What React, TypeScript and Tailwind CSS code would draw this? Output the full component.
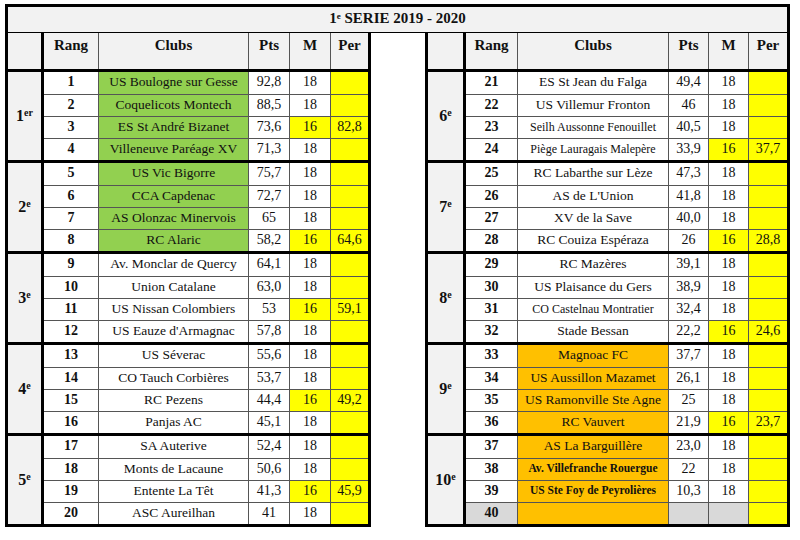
import React from "react";

type Row = {
  rang: number;
  club: string;
  pts: string;
  m: string;
  per: string;
  size?: "small" | "tiny";
};

type Section = { num: string; sup: string; rows: Row[] };

type Cols = { sec: string; rang: string; club: string; pts: string; m: string; per: string };

// widths are border-box (cell border included)
const leftCols: Cols = {
  sec: "w-[36px]",
  rang: "w-[54px]",
  club: "w-[150px]",
  pts: "w-[41px]",
  m: "w-[41px]",
  per: "w-[38px]",
};

const rightCols: Cols = {
  sec: "w-[38px]",
  rang: "w-[51px]",
  club: "w-[151px]",
  pts: "w-[40px]",
  m: "w-[40px]",
  per: "w-[39px]",
};

const leftSections: Section[] = [
  {
    num: "1",
    sup: "er",
    rows: [
      { rang: 1, club: "US Boulogne sur Gesse", pts: "92,8", m: "18", per: "" },
      { rang: 2, club: "Coquelicots Montech", pts: "88,5", m: "18", per: "" },
      { rang: 3, club: "ES St André Bizanet", pts: "73,6", m: "16", per: "82,8" },
      { rang: 4, club: "Villeneuve Paréage XV", pts: "71,3", m: "18", per: "" },
    ],
  },
  {
    num: "2",
    sup: "e",
    rows: [
      { rang: 5, club: "US Vic Bigorre", pts: "75,7", m: "18", per: "" },
      { rang: 6, club: "CCA Capdenac", pts: "72,7", m: "18", per: "" },
      { rang: 7, club: "AS Olonzac Minervois", pts: "65", m: "18", per: "" },
      { rang: 8, club: "RC Alaric", pts: "58,2", m: "16", per: "64,6" },
    ],
  },
  {
    num: "3",
    sup: "e",
    rows: [
      { rang: 9, club: "Av. Monclar de Quercy", pts: "64,1", m: "18", per: "" },
      { rang: 10, club: "Union Catalane", pts: "63,0", m: "18", per: "" },
      { rang: 11, club: "US Nissan Colombiers", pts: "53", m: "16", per: "59,1" },
      { rang: 12, club: "US Eauze d'Armagnac", pts: "57,8", m: "18", per: "" },
    ],
  },
  {
    num: "4",
    sup: "e",
    rows: [
      { rang: 13, club: "US Séverac", pts: "55,6", m: "18", per: "" },
      { rang: 14, club: "CO Tauch Corbières", pts: "53,7", m: "18", per: "" },
      { rang: 15, club: "RC Pezens", pts: "44,4", m: "16", per: "49,2" },
      { rang: 16, club: "Panjas AC", pts: "45,1", m: "18", per: "" },
    ],
  },
  {
    num: "5",
    sup: "e",
    rows: [
      { rang: 17, club: "SA Auterive", pts: "52,4", m: "18", per: "" },
      { rang: 18, club: "Monts de Lacaune", pts: "50,6", m: "18", per: "" },
      { rang: 19, club: "Entente La Têt", pts: "41,3", m: "16", per: "45,9" },
      { rang: 20, club: "ASC Aureilhan", pts: "41", m: "18", per: "" },
    ],
  },
];

const rightSections: Section[] = [
  {
    num: "6",
    sup: "e",
    rows: [
      { rang: 21, club: "ES St Jean du Falga", pts: "49,4", m: "18", per: "" },
      { rang: 22, club: "US Villemur Fronton", pts: "46", m: "18", per: "" },
      { rang: 23, club: "Seilh Aussonne Fenouillet", pts: "40,5", m: "18", per: "", size: "small" },
      { rang: 24, club: "Piège Lauragais Malepère", pts: "33,9", m: "16", per: "37,7", size: "small" },
    ],
  },
  {
    num: "7",
    sup: "e",
    rows: [
      { rang: 25, club: "RC Labarthe sur Lèze", pts: "47,3", m: "18", per: "" },
      { rang: 26, club: "AS de L'Union", pts: "41,8", m: "18", per: "" },
      { rang: 27, club: "XV de la Save", pts: "40,0", m: "18", per: "" },
      { rang: 28, club: "RC Couiza Espéraza", pts: "26", m: "16", per: "28,8" },
    ],
  },
  {
    num: "8",
    sup: "e",
    rows: [
      { rang: 29, club: "RC Mazères", pts: "39,1", m: "18", per: "" },
      { rang: 30, club: "US Plaisance du Gers", pts: "38,9", m: "18", per: "" },
      { rang: 31, club: "CO Castelnau Montratier", pts: "32,4", m: "18", per: "", size: "small" },
      { rang: 32, club: "Stade Bessan", pts: "22,2", m: "16", per: "24,6" },
    ],
  },
  {
    num: "9",
    sup: "e",
    rows: [
      { rang: 33, club: "Magnoac FC", pts: "37,7", m: "18", per: "" },
      { rang: 34, club: "US Aussillon Mazamet", pts: "26,1", m: "18", per: "" },
      { rang: 35, club: "US Ramonville Ste Agne", pts: "25", m: "18", per: "" },
      { rang: 36, club: "RC Vauvert", pts: "21,9", m: "16", per: "23,7" },
    ],
  },
  {
    num: "10",
    sup: "e",
    rows: [
      { rang: 37, club: "AS La Barguillère", pts: "23,0", m: "18", per: "" },
      { rang: 38, club: "Av. Villefranche Rouergue", pts: "22", m: "18", per: "", size: "tiny" },
      { rang: 39, club: "US Ste Foy de Peyrolières", pts: "10,3", m: "18", per: "", size: "tiny" },
      { rang: 40, club: "", pts: "", m: "", per: "" },
    ],
  },
];

const clubBg = (rang: number) => {
  if (rang <= 8) return "bg-[#92d050]";
  if (rang >= 33) return "bg-[#ffc000]";
  return "bg-white";
};

const clubSize = (size?: "small" | "tiny") => {
  if (size === "small") return "text-[12px]";
  if (size === "tiny") return "text-[11.5px] font-bold";
  return "text-[13.5px]";
};

const Table = ({ cols, sections, width }: { cols: Cols; sections: Section[]; width: string }) => {
  return (
    <div className={`${width} border-x-[3px] border-b-[3px] border-black`}>
      {/* header */}
      <div className="flex h-[39px] border-b-[3px] border-black bg-[#f2f2f2] text-[15px] font-bold">
        <div className={`${cols.sec} border-r-[3px] border-black`}></div>
        <div className={`${cols.rang} pt-[1px] text-center`}>Rang</div>
        <div className={`${cols.club} border-l border-[#555] pt-[1px] text-center`}>Clubs</div>
        <div className={`${cols.pts} border-l border-[#555] pt-[1px] text-center`}>Pts</div>
        <div className={`${cols.m} border-l border-[#555] pt-[1px] text-center`}>M</div>
        <div className={`${cols.per} border-l border-[#555] pt-[1px] text-center`}>Per</div>
      </div>
      {sections.map((s, si) => (
        <div
          key={s.num}
          className={`flex ${si < sections.length - 1 ? "border-b-[3px] border-black" : ""}`}
        >
          <div
            className={`${cols.sec} flex items-center justify-center border-r-[3px] border-black bg-[#f2f2f2] text-[16px] font-bold`}
          >
            <span>
              {s.num}
              <sup className="text-[10px]">{s.sup}</sup>
            </span>
          </div>
          <div className="flex flex-col">
            {s.rows.map((r, ri) => (
              <div
                key={r.rang}
                className={`flex h-[22px] text-[14px] leading-none ${ri > 0 ? "border-t border-[#555]" : ""}`}
              >
                <div
                  className={`${cols.rang} flex items-center justify-center pb-[2px] font-bold ${r.rang === 40 ? "bg-[#d9d9d9]" : "bg-white"}`}
                >
                  {r.rang}
                </div>
                <div
                  className={`${cols.club} flex items-center justify-center whitespace-nowrap border-l border-[#555] pb-[2px] ${clubBg(r.rang)} ${clubSize(r.size)}`}
                >
                  {r.club}
                </div>
                <div
                  className={`${cols.pts} flex items-center justify-center border-l border-[#555] pb-[2px] ${r.rang === 40 ? "bg-[#d9d9d9]" : "bg-white"}`}
                >
                  {r.pts}
                </div>
                <div
                  className={`${cols.m} flex items-center justify-center border-l border-[#555] pb-[2px] ${r.m === "16" ? "bg-[#ffff00]" : r.rang === 40 ? "bg-[#d9d9d9]" : "bg-white"}`}
                >
                  {r.m}
                </div>
                <div className={`${cols.per} flex items-center justify-center border-l border-[#555] bg-[#ffff00] pb-[2px]`}>
                  {r.per}
                </div>
              </div>
            ))}
          </div>
        </div>
      ))}
    </div>
  );
};

const App = () => {
  return (
    <div className="h-[540px] w-[800px] bg-white pl-[5px] pt-[4px] font-['Liberation_Serif',serif] text-[#111]">
      <div className="w-[785px]">
        <div className="flex h-[29px] items-center justify-center border-x-[3px] border-t-[3px] border-b border-black bg-[#f2f2f2] pb-[2px] text-[15px] font-bold">
          <span>
            1<sup className="text-[9px]">e</sup> SERIE 2019 - 2020
          </span>
        </div>
        <div className="flex justify-between">
          <Table cols={leftCols} sections={leftSections} width="w-[366px]" />
          <Table cols={rightCols} sections={rightSections} width="w-[365px]" />
        </div>
      </div>
    </div>
  );
};

export default App;
